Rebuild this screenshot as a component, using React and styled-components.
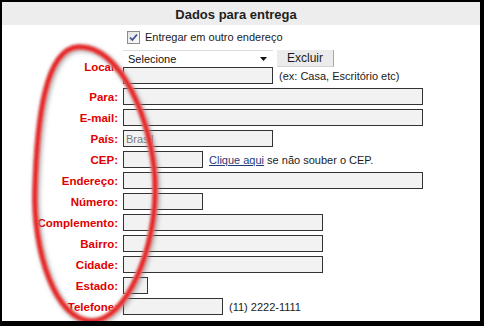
import React from 'react';
import styled, { createGlobalStyle } from 'styled-components';

const GlobalStyle = createGlobalStyle`
  body {
    margin: 0;
    background: #fff;
    font-family: "Liberation Sans", Arial, sans-serif;
  }
`;

const Frame = styled.div`
  position: relative;
  width: 484px;
  height: 326px;
  box-sizing: border-box;
  border-style: solid;
  border-color: #000;
  border-width: 2px 4px 5px 2px;
  background: #fff;
  overflow: hidden;
`;

const Header = styled.div`
  height: 23px;
  box-sizing: border-box;
  padding: 1px 10px 0 0;
  background: #ededed;
  display: flex;
  align-items: center;
  justify-content: center;
  font-weight: bold;
  font-size: 13px;
  color: #1e1e1e;
`;

const Form = styled.div`
  display: grid;
  grid-template-columns: 121px 1fr;
  row-gap: 4px;
  align-items: center;
`;

const CheckRow = styled.label`
  grid-column: 2;
  height: 21px;
  box-sizing: border-box;
  padding-top: 3px;
  display: flex;
  align-items: center;
  gap: 5px;
  font-size: 11px;
  color: #1a1a1a;
`;

const CheckBox = styled.span`
  width: 13px;
  height: 13px;
  box-sizing: border-box;
  margin-left: 4px;
  border: 1px solid #8c8c8c;
  background: linear-gradient(135deg, #e4e4e4, #fbfbfb);
  display: flex;
  align-items: center;
  justify-content: center;
`;

const Label = styled.div`
  text-align: right;
  padding-right: 5px;
  color: #e00000;
  font-weight: bold;
  font-size: 11.5px;
`;

const Field = styled.div`
  display: flex;
  align-items: center;
  gap: 6px;
  font-size: 11px;
  color: #1a1a1a;
`;

const Stack = styled.div`
  display: flex;
  flex-direction: column;
`;

const SelectRow = styled.div`
  display: flex;
  gap: 4px;
`;

const SelectBox = styled.div`
  width: 150px;
  height: 17px;
  box-sizing: border-box;
  border-top: 1px solid #dcdcdc;
  padding: 0 6px 0 5px;
  display: flex;
  align-items: center;
  justify-content: space-between;
  font-size: 11px;
  color: #111;
`;

const Button = styled.div`
  width: 57px;
  height: 17px;
  box-sizing: border-box;
  background: #ebebeb;
  border-right: 1px solid #a8a8a8;
  border-bottom: 1px solid #d4d4d4;
  display: flex;
  align-items: center;
  justify-content: center;
  font-size: 12px;
  color: #1a1a1a;
`;

const Input = styled.div`
  width: ${p => p.w}px;
  height: 17px;
  box-sizing: border-box;
  border: 1px solid #333;
  background: #f2f2f2;
  padding: 0 2px;
  display: flex;
  align-items: center;
  font-size: 11px;
  color: ${p => (p.muted ? '#7a7a7a' : '#111')};
`;

const Link = styled.span`
  color: #1f3a7a;
  text-decoration: underline;
`;

const Overlay = styled.svg`
  position: absolute;
  top: -2px;
  left: -2px;
  pointer-events: none;
`;

const rows = [
  ['Para:', 300],
  ['E-mail:', 300],
  ['País:', 150, 'Brasil'],
  ['CEP:', 80, null, 'cep'],
  ['Endereço:', 300],
  ['Número:', 80],
  ['Complemento:', 200],
  ['Bairro:', 200],
  ['Cidade:', 200],
  ['Estado:', 25],
  ['Telefone:', 100, null, '(11) 2222-1111'],
];

const ring =
  'M78 47 C120 44 152 120 155 180 C158 250 125 321 92 321 C55 321 33 250 35 190 C37 120 45 49 78 47 Z';

export default function App() {
  return (
    <Frame>
      <GlobalStyle />
      <Header>Dados para entrega</Header>
      <Form>
        <CheckRow>
          <CheckBox>
            <svg width="9" height="9" viewBox="0 0 9 9">
              <path d="M1 4.5 L3.4 7 L8 1.5" fill="none" stroke="#3d5190" strokeWidth="1.8" />
            </svg>
          </CheckBox>
          Entregar em outro endereço
        </CheckRow>

        <Label>Local:</Label>
        <Stack>
          <SelectRow>
            <SelectBox>
              Selecione
              <svg width="7" height="4" viewBox="0 0 7 4">
                <path d="M0 0 H7 L3.5 4 Z" fill="#111" />
              </svg>
            </SelectBox>
            <Button>Excluir</Button>
          </SelectRow>
          <Field>
            <Input w={150} />
            (ex: Casa, Escritório etc)
          </Field>
        </Stack>

        {rows.map(([label, w, value, extra]) => (
          <React.Fragment key={label}>
            <Label>{label}</Label>
            <Field>
              <Input w={w} muted={!!value}>{value}</Input>
              {extra === 'cep' ? (
                <span>
                  <Link>Clique aqui</Link> se não souber o CEP.
                </span>
              ) : (
                extra
              )}
            </Field>
          </React.Fragment>
        ))}
      </Form>

      <Overlay width="484" height="326" viewBox="0 0 484 326">
        <defs>
          <filter id="shade" x="-30%" y="-30%" width="160%" height="160%">
            <feGaussianBlur stdDeviation="2.2" />
          </filter>
          <filter id="soft" x="-30%" y="-30%" width="160%" height="160%">
            <feGaussianBlur stdDeviation="0.9" />
          </filter>
        </defs>
        <path d={ring} fill="none" stroke="#666" strokeOpacity="0.45" strokeWidth="7"
          transform="translate(1.5 1.5)" filter="url(#shade)" />
        <path d={ring} fill="none" stroke="#f27a7a" strokeWidth="6" filter="url(#soft)" />
        <path d={ring} fill="none" stroke="#e01a1a" strokeWidth="3" filter="url(#soft)" />
      </Overlay>
    </Frame>
  );
}
